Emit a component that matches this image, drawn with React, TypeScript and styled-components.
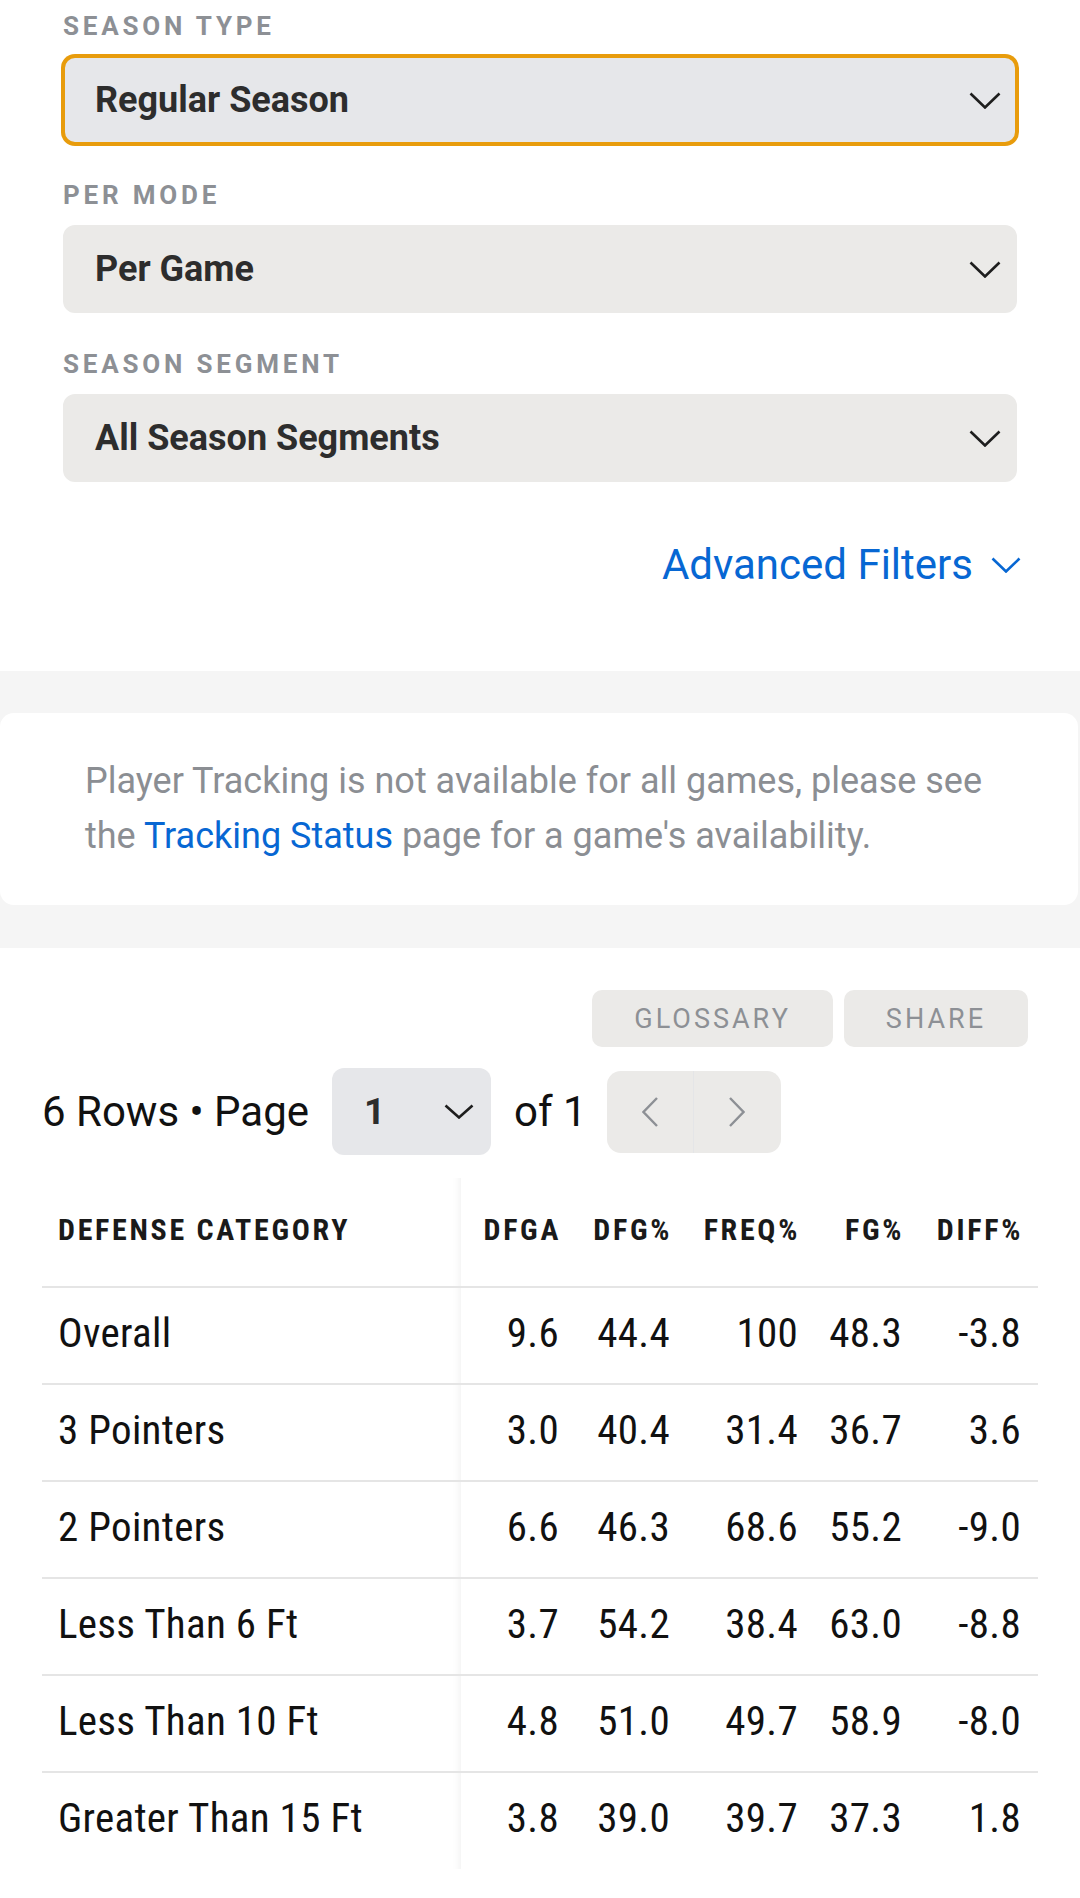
import styled, { createGlobalStyle, css } from "styled-components";

// Global
const GlobalStyle = createGlobalStyle`
  html, body {
    margin: 0;
    padding: 0;
    background: #ffffff;
  }
  body {
    font-family: Roboto, "Liberation Sans", Arial, sans-serif;
    color: #111111;
  }
  * {
    box-sizing: border-box;
  }
`;

// Styled Components
const Page = styled.main`
  width: 1080px;
  min-height: 1898px;
  background: #ffffff;
  overflow: hidden;
`;

const FiltersSection = styled.section`
  display: flex;
  flex-direction: column;
  gap: 36px;
  padding: 11px 63px 82px;
`;

const Field = styled.div`
  display: flex;
  flex-direction: column;
  gap: 15px;
`;

const Label = styled.span`
  font-size: 26px;
  line-height: 30px;
  font-weight: 700;
  letter-spacing: 3.8px;
  color: #8d9095;
  text-transform: uppercase;
`;

const Select = styled.div<{ $focused?: boolean }>`
  display: flex;
  align-items: center;
  justify-content: space-between;
  height: 88px;
  padding: 0 14px 0 30px;
  border-radius: 12px;
  border: 2px solid #ebeae8;
  background: #ebeae8;
  ${(props) =>
    props.$focused &&
    css`
      background: #e6e7ea;
      border-color: #e89c0c;
      box-shadow: 0 0 0 2px #e89c0c;
    `}
`;

const SelectText = styled.span`
  font-size: 36px;
  font-weight: 700;
  color: #2d2d2d;
`;

const AdvancedRow = styled.div`
  display: flex;
  justify-content: flex-end;
  margin-top: 23px;
  margin-right: -4px;
`;

const AdvancedLink = styled.a`
  display: flex;
  align-items: center;
  gap: 18px;
  font-size: 42px;
  line-height: 48px;
  color: #0767d3;
  text-decoration: none;
`;

const NoticeBand = styled.section`
  background: #f5f5f5;
  padding: 42px 2px 43px 0;
`;

const NoticeCard = styled.div`
  background: #ffffff;
  border-radius: 14px;
  padding: 41px 60px 41px 85px;
`;

const NoticeText = styled.p`
  margin: 0;
  font-size: 36px;
  line-height: 55px;
  color: #8b8e93;
`;

const InlineLink = styled.a`
  color: #0767d3;
  text-decoration: none;
`;

const TableSection = styled.section`
  padding: 42px 42px 0;
`;

const ActionsRow = styled.div`
  display: flex;
  justify-content: flex-end;
  gap: 11px;
  padding-right: 10px;
`;

const ActionButton = styled.button`
  height: 57px;
  padding: 0 42px;
  border: none;
  border-radius: 10px;
  background: #ebeae8;
  font-family: Roboto, "Liberation Sans", Arial, sans-serif;
  font-size: 27px;
  letter-spacing: 3px;
  color: #8d9095;
`;

const PagerRow = styled.div`
  display: flex;
  align-items: center;
  gap: 23px;
  margin-top: 21px;
  height: 87px;
`;

const PagerText = styled.span`
  font-size: 42px;
  color: #111111;
  white-space: nowrap;
`;

const PageSelect = styled.div`
  display: flex;
  align-items: center;
  justify-content: space-between;
  width: 159px;
  height: 87px;
  padding: 0 17px 0 32px;
  border-radius: 12px;
  background: #e6e7ea;
  font-size: 37px;
  font-weight: 700;
  color: #2d2d2d;
`;

const PagerButtons = styled.div`
  display: flex;
  height: 82px;
  margin-left: -3px;
  border-radius: 14px;
  overflow: hidden;
  background: #ebeae8;
`;

const PagerButton = styled.button<{ $divider?: boolean }>`
  display: flex;
  align-items: center;
  justify-content: center;
  width: 87px;
  border: none;
  background: transparent;
  ${(props) =>
    props.$divider &&
    css`
      border-right: 1px solid #e4e5e7;
    `}
`;

const StatsTable = styled.table`
  width: 996px;
  margin-top: 23px;
  border-collapse: collapse;
  table-layout: fixed;
  font-family: "Roboto Condensed", Roboto, "Liberation Sans", sans-serif;
`;

const stickyShadow = css`
  box-shadow: inset -10px 0 10px -10px rgba(0, 0, 0, 0.08);
`;

const HeadCell = styled.th<{ $first?: boolean }>`
  height: 109px;
  padding: 0 15px 6px 0;
  font-size: 30px;
  font-weight: 700;
  letter-spacing: 2.7px;
  color: #1a1a1a;
  text-align: right;
  vertical-align: middle;
  white-space: nowrap;
  ${(props) =>
    props.$first &&
    css`
      text-align: left;
      padding: 0 0 6px 16px;
      ${stickyShadow}
    `}
`;

const BodyRow = styled.tr`
  border-top: 2px solid #e5e5e5;
`;

const Cell = styled.td<{ $first?: boolean }>`
  height: 97px;
  padding: 0 17px 6px 0;
  font-size: 41px;
  letter-spacing: 0.3px;
  color: #111111;
  text-align: right;
  vertical-align: middle;
  white-space: nowrap;
  ${(props) =>
    props.$first &&
    css`
      text-align: left;
      padding: 0 0 6px 16px;
      ${stickyShadow}
    `}
`;

// Icons
const ChevronDown = ({
  width,
  height,
  color,
}: {
  width: number;
  height: number;
  color: string;
}) => (
  <svg width={width} height={height} viewBox={`0 0 ${width} ${height}`} fill="none">
    <polyline
      points={`1.5,1.5 ${width / 2},${height - 1.5} ${width - 1.5},1.5`}
      stroke={color}
      strokeWidth="2.6"
      strokeLinejoin="miter"
    />
  </svg>
);

const ChevronSide = ({ dir }: { dir: "left" | "right" }) => (
  <svg width="16" height="30" viewBox="0 0 16 30" fill="none">
    <polyline
      points={dir === "left" ? "15,1 1.5,15 15,29" : "1,1 14.5,15 1,29"}
      stroke="#8d9095"
      strokeWidth="2.4"
    />
  </svg>
);

// Data
const filters = [
  { label: "Season Type", value: "Regular Season", focused: true },
  { label: "Per Mode", value: "Per Game", focused: false },
  { label: "Season Segment", value: "All Season Segments", focused: false },
];

const columns = ["DFGA", "DFG%", "FREQ%", "FG%", "DIFF%"];
const colWidths = [419, 115, 111, 128, 104, 119];

const rows: [string, string, string, string, string, string][] = [
  ["Overall", "9.6", "44.4", "100", "48.3", "-3.8"],
  ["3 Pointers", "3.0", "40.4", "31.4", "36.7", "3.6"],
  ["2 Pointers", "6.6", "46.3", "68.6", "55.2", "-9.0"],
  ["Less Than 6 Ft", "3.7", "54.2", "38.4", "63.0", "-8.8"],
  ["Less Than 10 Ft", "4.8", "51.0", "49.7", "58.9", "-8.0"],
  ["Greater Than 15 Ft", "3.8", "39.0", "39.7", "37.3", "1.8"],
];

const App = () => {
  return (
    <Page>
      <GlobalStyle />
      <FiltersSection aria-label="Filters">
        {filters.map((f) => (
          <Field key={f.label}>
            <Label>{f.label}</Label>
            <Select $focused={f.focused}>
              <SelectText>{f.value}</SelectText>
              <ChevronDown width={32} height={17} color="#1e1e1e" />
            </Select>
          </Field>
        ))}
        <AdvancedRow>
          <AdvancedLink href="#">
            Advanced Filters
            <ChevronDown width={30} height={16} color="#0767d3" />
          </AdvancedLink>
        </AdvancedRow>
      </FiltersSection>

      <NoticeBand>
        <NoticeCard>
          <NoticeText>
            Player Tracking is not available for all games, please see
            <br />
            the <InlineLink href="#">Tracking Status</InlineLink> page for a
            game's availability.
          </NoticeText>
        </NoticeCard>
      </NoticeBand>

      <TableSection>
        <ActionsRow>
          <ActionButton>GLOSSARY</ActionButton>
          <ActionButton>SHARE</ActionButton>
        </ActionsRow>
        <PagerRow>
          <PagerText>6 Rows • Page</PagerText>
          <PageSelect>
            1
            <ChevronDown width={30} height={15} color="#1e1e1e" />
          </PageSelect>
          <PagerText>of 1</PagerText>
          <PagerButtons>
            <PagerButton $divider aria-label="Previous page">
              <ChevronSide dir="left" />
            </PagerButton>
            <PagerButton aria-label="Next page">
              <ChevronSide dir="right" />
            </PagerButton>
          </PagerButtons>
        </PagerRow>

        <StatsTable>
          <colgroup>
            {colWidths.map((w, i) => (
              <col key={i} style={{ width: w }} />
            ))}
          </colgroup>
          <thead>
            <tr>
              <HeadCell $first>DEFENSE CATEGORY</HeadCell>
              {columns.map((c) => (
                <HeadCell key={c}>{c}</HeadCell>
              ))}
            </tr>
          </thead>
          <tbody>
            {rows.map((r) => (
              <BodyRow key={r[0]}>
                <Cell $first>{r[0]}</Cell>
                {r.slice(1).map((v, i) => (
                  <Cell key={i}>{v}</Cell>
                ))}
              </BodyRow>
            ))}
          </tbody>
        </StatsTable>
      </TableSection>
    </Page>
  );
};

export default App;
